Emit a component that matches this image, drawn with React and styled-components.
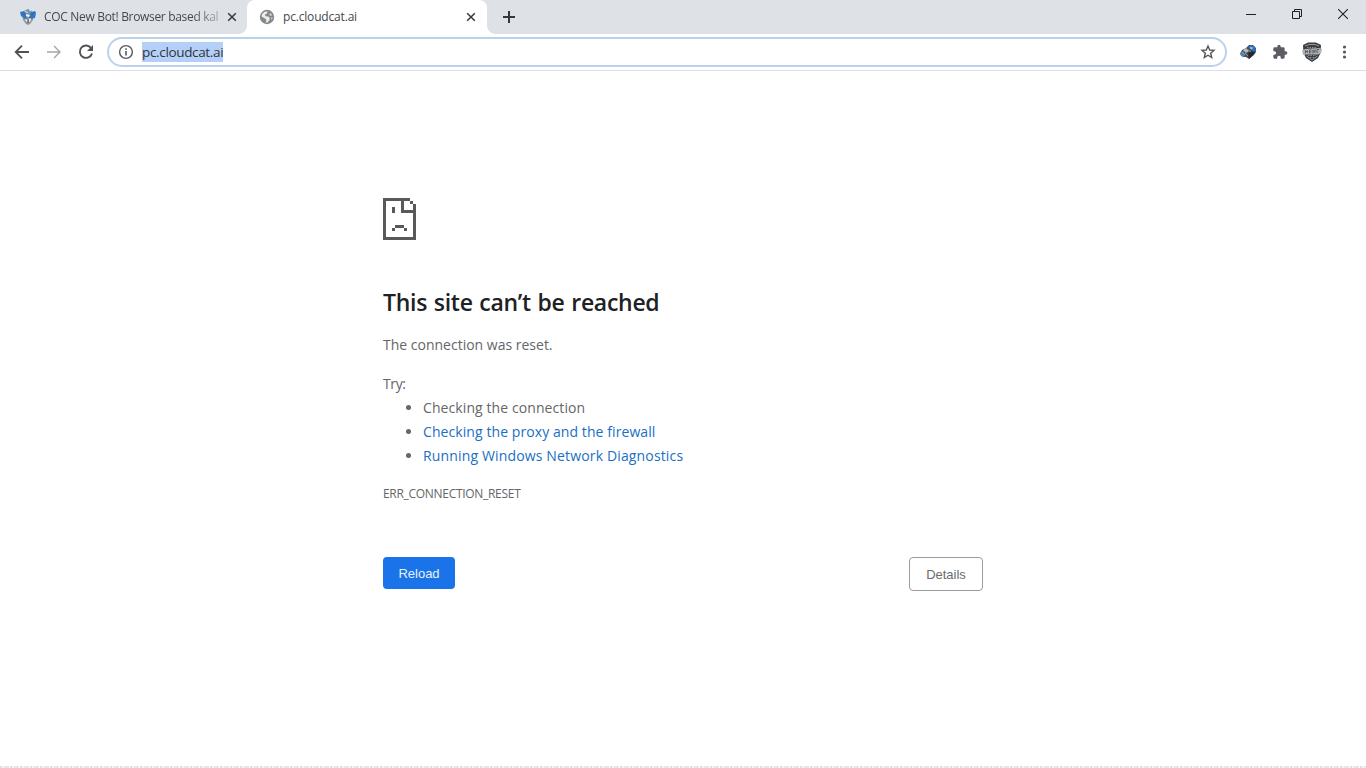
import React from "react";
import styled, { createGlobalStyle, css } from "styled-components";

const GlobalStyle = createGlobalStyle`
  * {
    box-sizing: border-box;
  }

  body {
    margin: 0;
    background: #fff;
    font-family: "Open Sans", "Noto Sans", sans-serif;
    overflow: hidden;
  }
`;

const Window = styled.div`
  display: flex;
  flex-direction: column;
  height: 100vh;
`;

const TabStrip = styled.div`
  display: flex;
  height: 34px;
  background: #dee1e6;
`;

const Tab = styled.div`
  position: relative;
  display: flex;
  align-items: center;
  width: ${({ $active }) => ($active ? 240 : 247)}px;
  height: 34px;
  padding: ${({ $active }) => ($active ? "0 10px 0 12px" : "0 9px 0 20px")};

  ${({ $active }) =>
    $active &&
    css`
      background: #fff;
      border-radius: 8px 8px 0 0;

      &::before,
      &::after {
        content: "";
        position: absolute;
        bottom: 0;
        width: 8px;
        height: 8px;
      }

      &::before {
        left: -8px;
        background: radial-gradient(circle at 0 0, transparent 7.5px, #fff 8px);
      }

      &::after {
        right: -8px;
        background: radial-gradient(circle at 100% 0, transparent 7.5px, #fff 8px);
      }
    `}
`;

const TabTitle = styled.span`
  flex: 1;
  margin-left: 8px;
  white-space: nowrap;
  font-size: 12px;
  line-height: 18px;
  letter-spacing: ${({ $spacing }) => $spacing}px;
  color: #45484c;

  ${({ $fade }) =>
    $fade &&
    css`
      mask-image: linear-gradient(to right, #000 148px, rgba(0, 0, 0, 0.35) 174px);
    `}
`;

const IconButton = styled.button`
  display: flex;
  flex-shrink: 0;
  align-items: center;
  justify-content: center;
  width: ${({ $width }) => $width || 32}px;
  height: ${({ $height }) => $height || 32}px;
  padding: 0;
  border: 0;
  background: none;
`;

const NewTab = styled(IconButton)`
  margin: 1px 0 0 6px;
`;

const WindowControls = styled.div`
  display: flex;
  margin-left: auto;
`;

const Toolbar = styled.div`
  display: flex;
  align-items: center;
  height: 37px;
  padding: 0 6px;
  background: #fff;
  border-bottom: 1px solid #dcdee1;
`;

const AddressBar = styled.div`
  display: flex;
  align-items: center;
  flex: 1;
  height: 30px;
  margin: 0 5px;
  padding: 0 1px 0 9px;
  border: 2px solid #bad2ee;
  border-radius: 15px;
`;

const Url = styled.span`
  margin: 0 auto 0 8px;
  font-size: 13.5px;
  line-height: 20px;
  letter-spacing: -0.34px;
  color: #30343a;
  background: #b5d0f8;
`;

const Page = styled.main`
  flex: 1;
  width: 600px;
  margin: 0 auto;
  padding-top: 127px;
  font-size: 15px;
  line-height: 24px;
  color: #646668;
`;

const SadPage = styled.svg`
  display: block;
  width: 33px;
  height: 42px;
`;

const Heading = styled.h1`
  margin: 47px 0 0;
  font-size: 23px;
  font-weight: 600;
  line-height: 30px;
  letter-spacing: -0.28px;
  word-spacing: 1px;
  color: #202124;
`;

const Paragraph = styled.p`
  margin: ${({ $top }) => $top || 15}px 0 0;
  font-size: 14px;
  letter-spacing: ${({ $spacing }) => $spacing || 0}px;
`;

const Suggestions = styled.ul`
  margin: 0;
  padding-left: 40px;
  font-size: 14px;
`;

const Suggestion = styled.li`
  letter-spacing: ${({ $spacing }) => $spacing || 0}px;
`;

const Link = styled.a`
  color: #1a6fc4;
  text-decoration: none;
`;

const ErrorCode = styled.div`
  margin-top: 14px;
  font-size: 12px;
  letter-spacing: -0.3px;
`;

const Buttons = styled.div`
  display: flex;
  align-items: flex-start;
  justify-content: space-between;
  margin-top: 51px;
`;

const Button = styled.button`
  width: ${({ $primary }) => ($primary ? 72 : 74)}px;
  height: ${({ $primary }) => ($primary ? 32 : 34)}px;
  padding: 1px 0 0;
  border: ${({ $primary }) => ($primary ? "0" : "1px solid #9b9b9d")};
  border-radius: 4px;
  font-family: "Liberation Sans", Arial, sans-serif;
  font-size: 13px;
  color: ${({ $primary }) => ($primary ? "#e8f2fd" : "#6a6c6f")};
  background: ${({ $primary }) => ($primary ? "#1a73e8" : "#fff")};
`;

const BottomEdge = styled.div`
  height: 2px;
  background: repeating-linear-gradient(to right, #dedede 0 2px, #f3f3f3 2px 4px, #e6e6e6 4px 9px, #fff 9px 10px);
`;

const CloseIcon = () => (
  <svg width="12" height="12" viewBox="0 0 12 12" stroke="#35383b" strokeWidth="1.5">
    <path d="M2.2 2.2l7.6 7.6M9.8 2.2L2.2 9.8" />
  </svg>
);

const BotIcon = () => (
  <svg width="16" height="16" viewBox="0 0 16 16">
    <path d="M2 4l6-3 6 3-1 7-3 4-2 1-2-1-3-4z" fill="#8f989f" />
    <path d="M0 3l4-1 2 2 1 2-2 4-4-3zM11 3l4-1 1 2-1 5-4 1-2-3z" fill="#2f78cf" />
    <path d="M4 2l4-2 4 2-1 2-3 1-3-1z" fill="#6d8fb8" />
    <path d="M5 2.5l3 1M9 1l2 1" stroke="#dbe4ec" />
    <path d="M6 5l4 1-1 2-3-1zM5.5 10l2 .5V13l-2-1zM9 10l2-1-.5 3L9 13z" fill="#eef1f3" />
    <path d="M2 5l3 1M11 6l3-2M5 8.5l2 1M9 8.5l2-.5M8 10v4" stroke="#54606e" />
  </svg>
);

const GlobeIcon = () => (
  <svg width="16" height="16" viewBox="0 0 16 16">
    <circle cx="8" cy="8" r="7.2" fill="#85898c" />
    <path d="M2.6 7.4C2.8 4.6 5 2.4 8.6 2.6L8 4.4 6 5.4l.4 1.8 2.8.3 1.6 1.4-.4 2.4-2 2.2-1.8-.1L7.6 11 6 9.4z" fill="#eceeee" />
    <path d="M11.5 4l1.6 2.2-1.6.6-1.2-1.2zM12.4 8.6l1.2-.6-.5 2-1 .8z" fill="#dfe1e1" />
  </svg>
);

const ArrowIcon = ({ forward }) => (
  <svg width="16" height="16" viewBox="0 0 16 16" fill="none" stroke={forward ? "#a3a5a7" : "#505356"} strokeWidth={forward ? 1.4 : 1.8}>
    <path d={forward ? "M1 8h13M8 2l6 6-6 6" : "M15 8H2M8 1.7L1.7 8 8 14.3"} />
  </svg>
);

const ReloadIcon = () => (
  <svg width="16" height="16" viewBox="0 0 16 16">
    <path d="M13.2 4.2A6.2 6.2 0 1 0 14 9.5" fill="none" stroke="#505356" strokeWidth="1.9" />
    <path d="M15 1v6H9z" fill="#505356" />
  </svg>
);

const InfoIcon = () => (
  <svg width="16" height="16" viewBox="0 0 16 16" fill="none" stroke="#55585b">
    <circle cx="8" cy="8" r="6.4" strokeWidth="1.4" />
    <path d="M8 7v4.5M8 4.3v1.5" strokeWidth="1.6" />
  </svg>
);

const StarIcon = () => (
  <svg width="16" height="16" viewBox="0 0 16 16" fill="none" stroke="#55585b" strokeWidth="1.4">
    <path d="M8 2l1.7 4 4.3.4-3.3 2.8 1 4.3L8 11.2l-3.7 2.3 1-4.3L2 6.4 6.3 6z" />
  </svg>
);

const CubeIcon = () => (
  <svg width="16" height="16" viewBox="0 0 16 16">
    <path d="M0 10l2-4 4-2 3-3 4 0 3 3v4l-2 3-5 4-3-2-3 0z" fill="#4a4e52" />
    <path d="M8 3l3-2 4 2 1 4-3 1-2-2z" fill="#2a72c8" />
    <path d="M0 9l3-2 2 3-1 3-3-1z" fill="#4f84b8" />
    <path d="M3 6l3-2 3 3-3 2zM10 3l3 .5-1 2-2-1z" fill="#b4bcc2" />
    <path d="M8 9l3-2 4 1-3 4-3 3z" fill="#26292c" />
    <path d="M2 8l3 3M5 9l3 3M7 5l4 3" stroke="#8d949a" />
  </svg>
);

const PuzzleIcon = () => (
  <svg width="16" height="16" viewBox="0 0 24 24" fill="#5a5d61">
    <path d="M20.5 11H19V7a2 2 0 0 0-2-2h-4V3.5a2.5 2.5 0 0 0-5 0V5H4a2 2 0 0 0-2 2v3.8h1.5a2.7 2.7 0 0 1 0 5.4H2V20a2 2 0 0 0 2 2h3.8v-1.5a2.7 2.7 0 0 1 5.4 0V22H17a2 2 0 0 0 2-2v-4h1.5a2.5 2.5 0 0 0 0-5z" />
  </svg>
);

const ShieldIcon = () => (
  <svg width="20" height="20" viewBox="0 0 20 20">
    <path d="M1 3l5-2.5h8L19 3l-.5 8-2.5 5-6 4-6-4-2.5-5z" fill="#3a3c3f" />
    <path d="M3 4l4-1.5h6L17 4M4.5 14l5.5 4 5.5-4" fill="none" stroke="#a2a5a7" strokeWidth=".9" />
    <path d="M5 5.5h10M6 13.5h8M8 15.5h4" stroke="#8c8f92" strokeDasharray="1.5 1" />
    <path d="M0 8.5L3 7l14-1 3 1-1 4-3 1.5H4L1 13z" fill="#aeb1b3" />
    <path d="M3.5 11.5V8.5l2 2v-2M7.5 11.5v-3.5h2M7.5 10h2M11 11.5V8l2 2.5V7.5M15 11V7.5h2" fill="none" stroke="#4e5154" strokeWidth=".9" />
  </svg>
);

const MenuIcon = () => (
  <svg width="16" height="16" viewBox="0 0 16 16" fill="#55585b">
    <circle cx="8.5" cy="3" r="1.6" />
    <circle cx="8.5" cy="8" r="1.6" />
    <circle cx="8.5" cy="13" r="1.6" />
  </svg>
);

const App = () => {
  return (
    <Window>
      <GlobalStyle />
      <TabStrip>
        <Tab>
          <BotIcon />
          <TabTitle $spacing={-0.32} $fade>COC New Bot! Browser based kal</TabTitle>
          <IconButton $width={12}><CloseIcon /></IconButton>
        </Tab>
        <Tab $active>
          <GlobeIcon />
          <TabTitle $spacing={-0.18}>pc.cloudcat.ai</TabTitle>
          <IconButton $width={12}><CloseIcon /></IconButton>
        </Tab>
        <NewTab>
          <svg width="14" height="14" viewBox="0 0 14 14" stroke="#35383b" strokeWidth="2">
            <path d="M7 1v12M1 7h12" />
          </svg>
        </NewTab>
        <WindowControls>
          <IconButton $width={46} $height={28}>
            <svg width="10" height="10" stroke="#202124"><path d="M0 5.5h10" /></svg>
          </IconButton>
          <IconButton $width={46} $height={28}>
            <svg width="10" height="10" fill="none" stroke="#202124">
              <path d="M.5 2.5h7v7h-7zM2.5 2.5v-2h7v7h-2" />
            </svg>
          </IconButton>
          <IconButton $width={46} $height={28}>
            <svg width="10" height="10" stroke="#202124" strokeWidth="1.1"><path d="M0 0l10 10M10 0L0 10" /></svg>
          </IconButton>
        </WindowControls>
      </TabStrip>
      <Toolbar>
        <IconButton><ArrowIcon /></IconButton>
        <IconButton><ArrowIcon forward /></IconButton>
        <IconButton><ReloadIcon /></IconButton>
        <AddressBar>
          <InfoIcon />
          <Url>pc.cloudcat.ai</Url>
          <IconButton $height={26}><StarIcon /></IconButton>
        </AddressBar>
        <IconButton><CubeIcon /></IconButton>
        <IconButton><PuzzleIcon /></IconButton>
        <IconButton><ShieldIcon /></IconButton>
        <IconButton><MenuIcon /></IconButton>
      </Toolbar>
      <Page>
        <SadPage viewBox="0 0 11 14" fill="#595959" shapeRendering="crispEdges">
          <path d="M0 0h9v1H7v3h4v1H6V1H1v12h9V2h1v12H0zM9 1h1v1H9zM3 3h1v2H3zM4 9h3v1H4zM3 10h1v1H3zM7 10h1v1H7z" />
        </SadPage>
        <Heading>This site can’t be reached</Heading>
        <Paragraph $top={16}>The connection was reset.</Paragraph>
        <Paragraph $spacing={-0.4}>Try:</Paragraph>
        <Suggestions>
          <Suggestion $spacing={0.09}>Checking the connection</Suggestion>
          <Suggestion $spacing={0.08}><Link>Checking the proxy and the firewall</Link></Suggestion>
          <Suggestion $spacing={0.15}><Link>Running Windows Network Diagnostics</Link></Suggestion>
        </Suggestions>
        <ErrorCode>ERR_CONNECTION_RESET</ErrorCode>
        <Buttons>
          <Button $primary>Reload</Button>
          <Button>Details</Button>
        </Buttons>
      </Page>
      <BottomEdge />
    </Window>
  );
};

export default App;
